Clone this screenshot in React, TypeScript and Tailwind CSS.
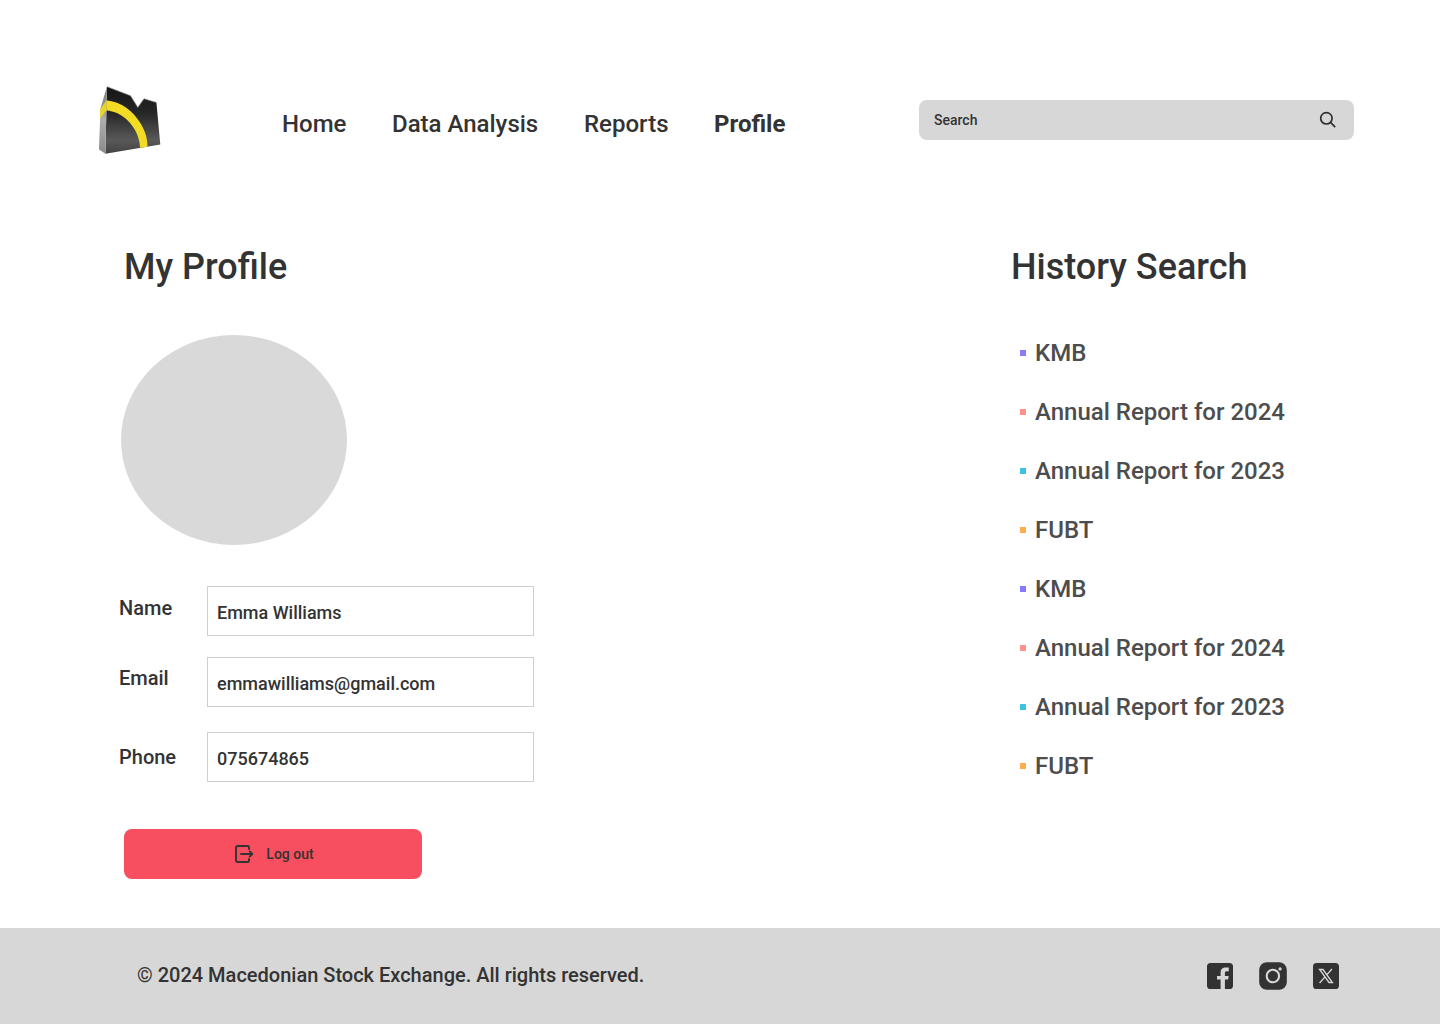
const navItems = [
  { label: 'Home', className: 'w-[110px] font-medium' },
  { label: 'Data Analysis', className: 'w-[192px] font-medium' },
  { label: 'Reports', className: 'w-[130px] font-medium' },
  { label: 'Profile', className: 'font-bold' },
];

const fields = [
  { label: 'Name', value: 'Emma Williams', row: 'mb-[21px]', labelClass: 'mt-2' },
  { label: 'Email', value: 'emmawilliams@gmail.com', row: 'mb-[25px]', labelClass: 'mt-[7px]' },
  { label: 'Phone', value: '075674865', row: '', labelClass: 'mt-[11px]' },
];

const history = [
  { label: 'KMB', color: 'bg-[#8979ff]' },
  { label: 'Annual Report for 2024', color: 'bg-[#ff928a]' },
  { label: 'Annual Report for 2023', color: 'bg-[#3cc3df]' },
  { label: 'FUBT', color: 'bg-[#ffae4c]' },
  { label: 'KMB', color: 'bg-[#8979ff]' },
  { label: 'Annual Report for 2024', color: 'bg-[#ff928a]' },
  { label: 'Annual Report for 2023', color: 'bg-[#3cc3df]' },
  { label: 'FUBT', color: 'bg-[#ffae4c]' },
];

function Logo() {
  return (
    <svg width="80" height="84" viewBox="0 0 80 84" className="shrink-0" aria-label="Macedonian Stock Exchange">
      <defs>
        <linearGradient id="front" x1="0" y1="0" x2="0" y2="1">
          <stop offset="0" stopColor="#151515" />
          <stop offset="0.4" stopColor="#282728" />
          <stop offset="0.8" stopColor="#5a595a" />
          <stop offset="1" stopColor="#434243" />
        </linearGradient>
        <linearGradient id="side" x1="0" y1="0" x2="0" y2="1">
          <stop offset="0" stopColor="#777777" />
          <stop offset="0.5" stopColor="#adadad" />
          <stop offset="1" stopColor="#8a8a8a" />
        </linearGradient>
        <clipPath id="face">
          <path d="M16.9 8.7 40.5 17.8 47.8 29.6 54 20.8 66.4 24.6 70.3 66.6 15.4 75.7Z" />
        </clipPath>
      </defs>
      <path d="M16.9 8.7 40.5 17.8 47.8 29.6 54 20.8 66.4 24.6 70.3 66.6 15.4 75.7Z" fill="url(#front)" />
      <path d="M16.9 8.7 10.4 30.5 9 71.5 15.4 75.7Z" fill="url(#side)" />
      <path d="M15.8 22.2C32 23.5 43 33.5 50 44.5 55 52.5 57.7 60 57.5 70.5L50.2 71.2C49.8 59 45.2 50 37.2 42 31.2 36.2 24.5 33.2 16 32.2Z" fill="#f2dc24" clipPath="url(#face)" />
      <path d="M16.6 22.2 16.2 32.2 9.9 41 10.3 31Z" fill="#ead526" />
      <path d="M16.9 8.7 40.5 17.8 47.8 29.6 54 20.8 66.4 24.6" fill="none" stroke="#777" strokeWidth="0.7" />
    </svg>
  );
}

function SearchIcon() {
  return (
    <svg width="18" height="18" viewBox="0 0 18 18" fill="none" stroke="#2f2f2f" strokeWidth="1.7">
      <circle cx="7.4" cy="7.3" r="5.7" />
      <path d="m11.5 11.4 4.7 4.7" />
    </svg>
  );
}

function LogoutIcon() {
  return (
    <svg width="20" height="20" viewBox="0 0 20 20" fill="none" stroke="#333" strokeWidth="1.9" strokeLinecap="round" strokeLinejoin="round">
      <path d="M15 5V3.3Q15 2 13.7 2H3.8Q2 2 2 3.8V16.2Q2 18 3.8 18H13.7Q15 18 15 16.7V15" />
      <path d="M7 10H18.3M15.7 7.4 18.3 10 15.7 12.6" />
    </svg>
  );
}

function FacebookIcon() {
  return (
    <svg width="26" height="26" viewBox="0 0 26 26">
      <rect width="26" height="26" rx="3.6" fill="#333" />
      <path d="M13.6 26V16.6H10V13H13.6V9.8C13.6 6.2 15.6 4.6 18.8 4.6H21.8V8.2H19.8C18.3 8.2 17.9 8.9 17.9 10.2V13H21.7L21.1 16.6H17.9V26Z" fill="#d7d7d7" />
    </svg>
  );
}

function InstagramIcon() {
  return (
    <svg width="28" height="28" viewBox="0 0 28 28">
      <rect x="0.2" y="0.2" width="27.6" height="27.6" rx="7.6" fill="#333" />
      <circle cx="13.9" cy="14" r="6.2" fill="none" stroke="#d7d7d7" strokeWidth="2.1" />
      <circle cx="21.1" cy="6.9" r="1.6" fill="#d7d7d7" />
    </svg>
  );
}

function XIcon() {
  return (
    <svg width="26" height="26" viewBox="0 0 26 26">
      <rect width="26" height="26" rx="3.6" fill="#333" />
      <g fill="none" stroke="#d7d7d7" strokeWidth="1.35">
        <path d="M6.6 6.5H10L19.4 19.5H16Z" />
        <path d="M18.9 6 13.8 11.9M12 13.9 6.6 20" />
      </g>
    </svg>
  );
}

export default function App() {
  return (
    <div className="flex h-[1024px] w-[1440px] flex-col overflow-hidden bg-white font-['Roboto',sans-serif] text-[#333333]">
      <header className="flex h-[240px] shrink-0 items-start pl-[90px] pt-[78px]">
        <Logo />
        <nav className="ml-[112px] mt-8 flex w-[637px] text-2xl leading-7">
          {navItems.map((item) => (
            <a key={item.label} className={`whitespace-nowrap ${item.className}`}>{item.label}</a>
          ))}
        </nav>
        <div className="mt-[22px] flex h-10 w-[435px] items-center justify-between rounded-lg bg-[#d7d7d7] pl-[15px] pr-[17px] text-sm font-medium">
          <span>Search</span>
          <SearchIcon />
        </div>
      </header>

      <main className="flex h-[688px] shrink-0">
        <section className="w-[1011px] pl-[119px]">
          <h1 className="ml-[5px] mt-[5px] text-4xl font-medium leading-[44px]">My Profile</h1>
          <div className="ml-[2px] mt-[46px] h-[210px] w-[226px] rounded-[50%] bg-[#d9d9d9]" />
          <div className="mt-[41px]">
            {fields.map((field) => (
              <div key={field.label} className={`flex ${field.row}`}>
                <label className={`w-[88px] text-xl font-medium leading-7 ${field.labelClass}`}>{field.label}</label>
                <div className="h-[50px] w-[327px] border border-[#cfcfcf] pl-[9px] pt-[14px] text-lg font-medium leading-6">
                  {field.value}
                </div>
              </div>
            ))}
          </div>
          <button className="ml-[5px] mt-[47px] flex h-[50px] w-[298px] items-center justify-center gap-3 rounded-lg bg-[#f74f5f] pl-[2px] text-sm font-medium">
            <LogoutIcon />
            <span>Log out</span>
          </button>
        </section>

        <section>
          <h2 className="mt-[5px] text-4xl font-medium leading-[44px]">History Search</h2>
          <ul className="ml-[9px] mt-[50px] flex flex-col gap-[31px] text-2xl font-medium leading-7 text-[#4d4d4d]">
            {history.map((item, index) => (
              <li key={index} className="flex items-center gap-[9px]">
                <span className={`size-1.5 ${item.color}`} />
                {item.label}
              </li>
            ))}
          </ul>
        </section>
      </main>

      <footer className="flex h-24 shrink-0 items-center justify-between bg-[#d7d7d7] pl-[137px] pr-[101px]">
        <p className="pb-[2px] text-xl font-medium leading-6">© 2024 Macedonian Stock Exchange. All rights reserved.</p>
        <div className="flex items-center gap-[26px]">
          <FacebookIcon />
          <InstagramIcon />
          <XIcon />
        </div>
      </footer>
    </div>
  );
}
